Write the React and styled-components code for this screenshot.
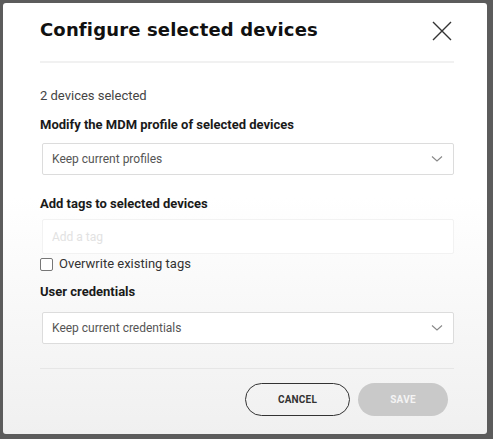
import React from 'react'
import styled, { createGlobalStyle } from 'styled-components'

const Global = createGlobalStyle`
    html, body {
        margin: 0;
        padding: 0;
        background: #5c5c5c;
    }
    body {
        width: 493px;
        height: 439px;
        overflow: hidden;
        font-family: Roboto, "Liberation Sans", sans-serif;
    }
`

const Backdrop = styled.div`
    height: 439px;
    padding: 3px 6px 5px 3px;
    box-sizing: border-box;
`

const Modal = styled.div`
    height: 100%;
    box-sizing: border-box;
    background: linear-gradient(to bottom, #ffffff 0%, #ffffff 45%, #f0f0f0 100%);
    border-radius: 3px;
    padding: 0 33px 0 37px;
    display: flex;
    flex-direction: column;
`

const Header = styled.div`
    display: flex;
    align-items: flex-start;
    justify-content: space-between;
    height: 60px;
    padding-top: 17px;
    border-bottom: 2px solid #f1f1f1;
    box-sizing: border-box;
`

const Title = styled.h2`
    margin: 0;
    font-family: "DejaVu Sans", Lato, sans-serif;
    font-weight: 700;
    font-size: 18px;
    line-height: 20px;
    letter-spacing: 0.15px;
    color: #111;
`

const Close = styled.button`
    border: none;
    background: none;
    padding: 0;
    width: 20px;
    height: 20px;
    margin: 1px 2px 0 0;
    display: flex;
`

const Body = styled.div`
    padding-top: 25px;
    display: flex;
    flex-direction: column;
`

const Count = styled.div`
    font-size: 13px;
    color: #444;
    line-height: 16px;
`

const Label = styled.div`
    font-size: 13px;
    font-weight: 700;
    color: #1a1a1a;
    line-height: 16px;
    margin-top: ${p => p.top}px;
`

const Select = styled.div`
    margin: ${p => p.top}px 0 0 2px;
    height: 32px;
    box-sizing: border-box;
    border: 1px solid #dcdcdc;
    border-radius: 2px;
    background: #fff;
    display: flex;
    align-items: center;
    justify-content: space-between;
    padding: 0 10px 0 9px;
    font-size: 12px;
    color: #555;
`

const TagInput = styled.input`
    margin: 7px 0 0 2px;
    height: 35px;
    box-sizing: border-box;
    border: 1px solid #f2f2f2;
    border-radius: 2px;
    background: #fff;
    padding: 0 9px;
    font-family: inherit;
    font-size: 12px;
    outline: none;

    &::placeholder {
        color: #e2e2e2;
    }
`

const CheckRow = styled.label`
    display: flex;
    align-items: center;
    gap: 6px;
    margin-top: 2px;
    font-size: 13px;
    color: #333;
    line-height: 16px;
`

const Box = styled.span`
    width: 11px;
    height: 11px;
    border: 1px solid #777;
    border-radius: 2px;
    background: #fff;
`

const Footer = styled.div`
    margin-top: 24px;
    border-top: 1px solid #e6e6e6;
    display: flex;
    justify-content: flex-end;
    gap: 8px;
    padding: 14px 6px 0 0;
`

const Button = styled.button`
    height: 33px;
    width: ${p => p.w}px;
    border-radius: 17px;
    font-family: inherit;
    font-size: 10px;
    font-weight: 700;
    letter-spacing: 0.2px;
    border: ${p => (p.primary ? 'none' : '1px solid #333')};
    background: ${p => (p.primary ? '#c9c9c9' : 'transparent')};
    color: ${p => (p.primary ? '#f4f4f4' : '#333')};
`

const Chevron = () => (
    <svg width="12" height="8" viewBox="0 0 12 8">
        <path d="M1 1.5 L6 6 L11 1.5" fill="none" stroke="#888" strokeWidth="1.1" />
    </svg>
)

function App() {
    return (
        <Backdrop>
            <Global />
            <Modal>
                <Header>
                    <Title>Configure selected devices</Title>
                    <Close>
                        <svg width="20" height="20" viewBox="0 0 20 20">
                            <path d="M1 1 L19 19 M19 1 L1 19" stroke="#333" strokeWidth="1.4" />
                        </svg>
                    </Close>
                </Header>
                <Body>
                    <Count>2 devices selected</Count>
                    <Label top={13}>Modify the MDM profile of selected devices</Label>
                    <Select top={10}>
                        Keep current profiles
                        <Chevron />
                    </Select>
                    <Label top={21}>Add tags to selected devices</Label>
                    <TagInput placeholder="Add a tag" />
                    <CheckRow>
                        <Box />
                        Overwrite existing tags
                    </CheckRow>
                    <Label top={12}>User credentials</Label>
                    <Select top={12}>
                        Keep current credentials
                        <Chevron />
                    </Select>
                </Body>
                <Footer>
                    <Button w={105}>CANCEL</Button>
                    <Button primary w={90}>SAVE</Button>
                </Footer>
            </Modal>
        </Backdrop>
    )
}

export default App
